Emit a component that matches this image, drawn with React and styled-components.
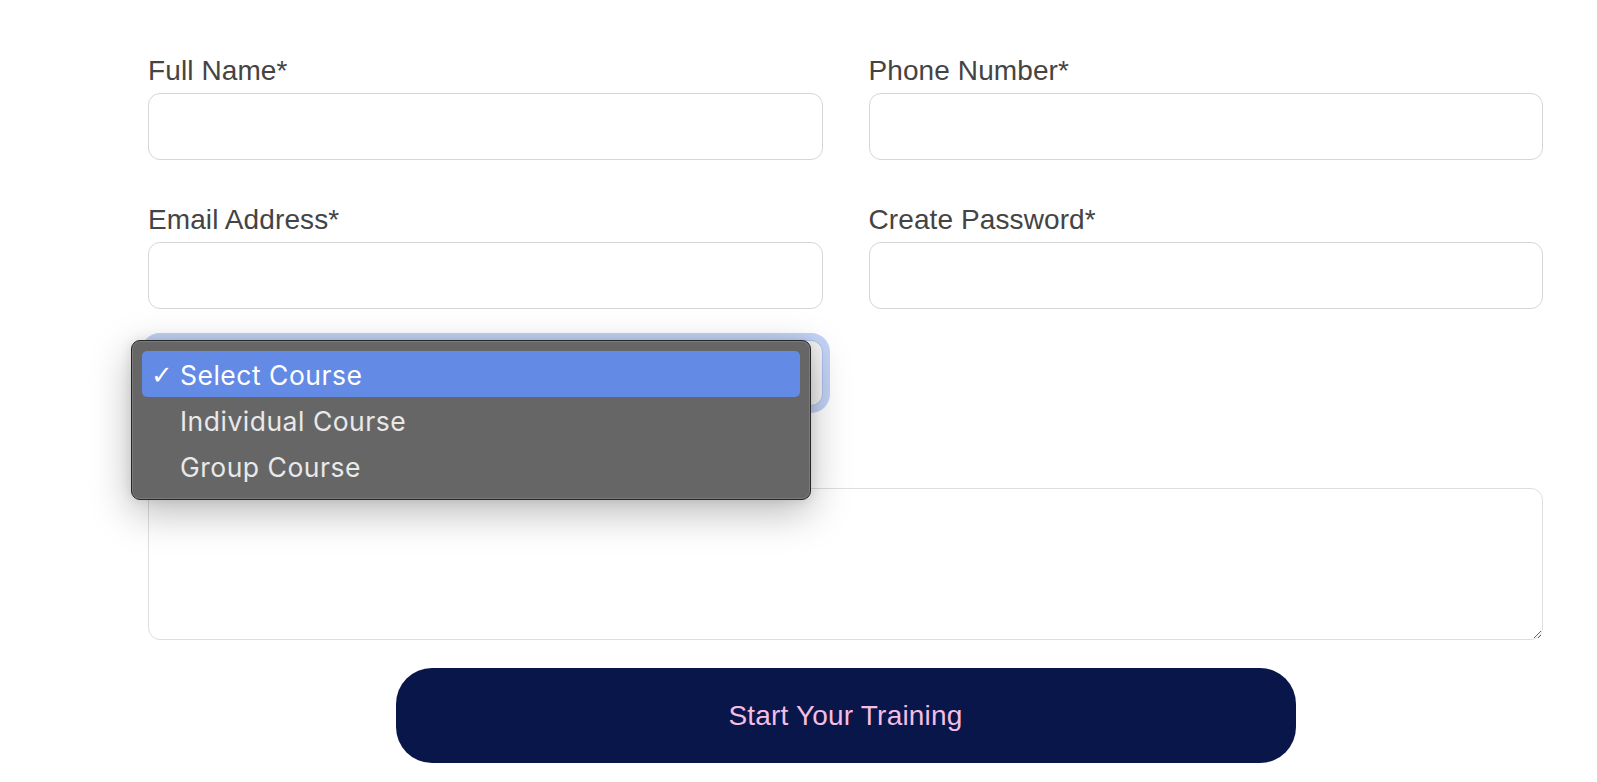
import React from "react";
import styled, { createGlobalStyle } from "styled-components";

const Global = createGlobalStyle`
  html, body { margin: 0; padding: 0; background: #ffffff; }
  body { font-family: "Liberation Sans", Arial, Helvetica, sans-serif; }
  *, *::before, *::after { box-sizing: border-box; }
`;

const Form = styled.form`
  width: 1395px;
  margin-left: 148px;
  padding-top: 55px;
  display: flex;
  flex-direction: column;
`;

const Grid = styled.div`
  display: grid;
  grid-template-columns: 1fr 1fr;
  column-gap: 46px;
  row-gap: 44px;
`;

const Field = styled.div`
  display: flex;
  flex-direction: column;
  margin-top: ${(p) => p.$top || 0}px;
`;

const Label = styled.label`
  font-size: 28px;
  line-height: 32px;
  color: #444444;
  letter-spacing: 0.1px;
  margin-bottom: 6px;
`;

const Input = styled.input`
  height: 67px;
  border: 1px solid #d6d6d6;
  border-radius: 12px;
  padding: 0 18px;
  font: inherit;
  font-size: 22px;
  background: #ffffff;
  outline: none;
`;

const SelectRow = styled.div`
  display: grid;
  grid-template-columns: 1fr 1fr;
  column-gap: 46px;
  margin-top: 31px;
`;

const SelectWrap = styled.div`
  position: relative;
`;

const SelectBox = styled.div`
  height: 66px;
  border: 1px solid #a9bfee;
  border-radius: 12px;
  background: #f3f3f3;
  box-shadow: 0 0 0 7px #c3d3f5;
`;

const Popup = styled.ul`
  position: absolute;
  left: -17px;
  top: 0;
  width: 680px;
  margin: 0;
  padding: 10px;
  list-style: none;
  background: #666666;
  border: 1px solid #262626;
  border-radius: 9px;
  box-shadow: inset 0 0 0 1px rgba(255, 255, 255, 0.14),
    0 12px 40px rgba(0, 0, 0, 0.28), 0 0 12px rgba(0, 0, 0, 0.1);
  z-index: 10;
  font-family: "Inter", "DejaVu Sans", sans-serif;
`;

const Option = styled.li`
  position: relative;
  height: 46px;
  display: flex;
  align-items: center;
  padding-left: 38px;
  padding-top: 2px;
  border-radius: 5px;
  font-size: 26.5px;
  letter-spacing: 0.5px;
  color: ${(p) => (p.$active ? "#ffffff" : "#e9e9e9")};
  background: ${(p) => (p.$active ? "#638ae4" : "transparent")};
`;

const Check = styled.span`
  position: absolute;
  left: 9px;
  top: 50%;
  transform: translateY(-48%);
  font-family: "DejaVu Sans", sans-serif;
  font-weight: bold;
  font-size: 26px;
  color: #ffffff;
`;

const TextArea = styled.textarea`
  height: 152px;
  border: 1px solid #dedede;
  border-radius: 12px;
  padding: 14px 18px;
  font: inherit;
  font-size: 22px;
  resize: vertical;
  outline: none;
  background: #ffffff;
`;

const Submit = styled.button`
  margin: 28px auto 0;
  width: 900px;
  height: 95px;
  border: none;
  border-radius: 36px;
  background: #081649;
  color: #f4bde3;
  font-family: "Liberation Sans", Arial, sans-serif;
  font-size: 28px;
  letter-spacing: 0.2px;
  cursor: pointer;
`;

const options = ["Select Course", "Individual Course", "Group Course"];

export default function App() {
  return (
    <>
      <Global />
      <Form onSubmit={(e) => e.preventDefault()}>
        <Grid>
          <Field>
            <Label>Full Name*</Label>
            <Input type="text" />
          </Field>
          <Field>
            <Label>Phone Number*</Label>
            <Input type="tel" />
          </Field>
          <Field>
            <Label>Email Address*</Label>
            <Input type="email" />
          </Field>
          <Field>
            <Label>Create Password*</Label>
            <Input type="password" />
          </Field>
        </Grid>
        <SelectRow>
          <SelectWrap>
            <SelectBox />
            <Popup>
              {options.map((o, i) => (
                <Option key={o} $active={i === 0}>
                  {i === 0 && <Check>✓</Check>}
                  {o}
                </Option>
              ))}
            </Popup>
          </SelectWrap>
        </SelectRow>
        <Field $top={82}>
          <TextArea aria-label="Message" />
        </Field>
        <Submit type="submit">Start Your Training</Submit>
      </Form>
    </>
  );
}
